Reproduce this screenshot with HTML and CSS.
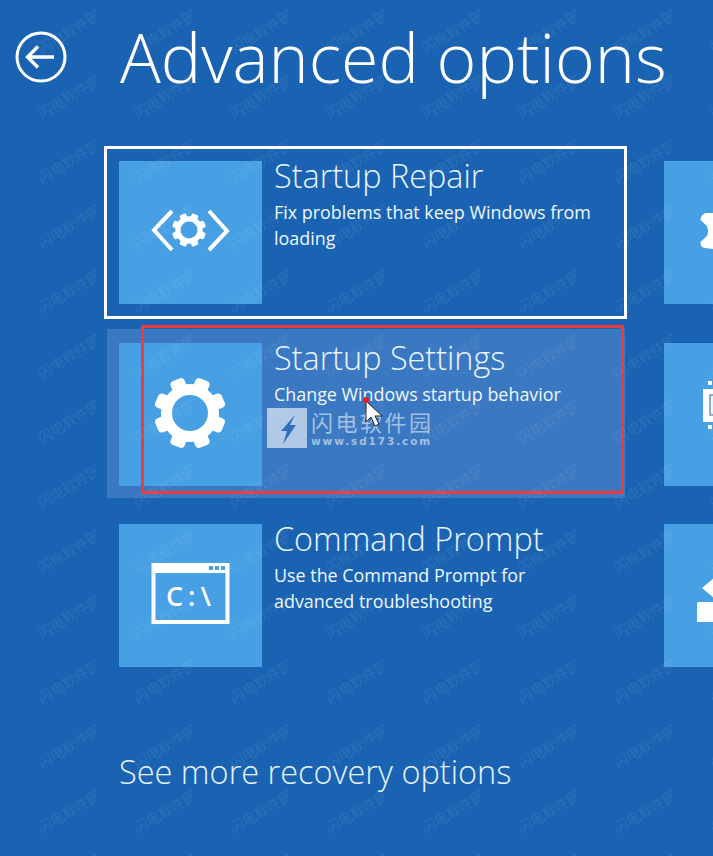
FILE: index.html
```html
<!DOCTYPE html>
<html lang="en">
<head>
  <meta charset="UTF-8" />
  <meta name="viewport" content="width=device-width, initial-scale=1.0"/>
  <title>Advanced options</title>
  <link rel="stylesheet" href="styles.css">
</head>
<body>

  <svg class="defs" width="0" height="0">
    <defs>
      <symbol id="gear" viewBox="-36 -36 72 72">
        <circle r="23.5" fill="none" stroke="#fff" stroke-width="11"/>
        <g fill="#fff">
          <rect x="-7.5" y="-36" width="15" height="12" rx="4" transform="rotate(22.5)"/>
          <rect x="-7.5" y="-36" width="15" height="12" rx="4" transform="rotate(67.5)"/>
          <rect x="-7.5" y="-36" width="15" height="12" rx="4" transform="rotate(112.5)"/>
          <rect x="-7.5" y="-36" width="15" height="12" rx="4" transform="rotate(157.5)"/>
          <rect x="-7.5" y="-36" width="15" height="12" rx="4" transform="rotate(202.5)"/>
          <rect x="-7.5" y="-36" width="15" height="12" rx="4" transform="rotate(247.5)"/>
          <rect x="-7.5" y="-36" width="15" height="12" rx="4" transform="rotate(292.5)"/>
          <rect x="-7.5" y="-36" width="15" height="12" rx="4" transform="rotate(337.5)"/>
        </g>
      </symbol>
    </defs>
  </svg>

  <header class="page-header">
    <svg class="back-icon" width="54" height="54" viewBox="0 0 54 54">
      <circle cx="27" cy="27" r="24" fill="none" stroke="#fff" stroke-width="3"/>
      <path d="M40 27H14M24 16.5 13.5 27 24 37.5" fill="none" stroke="#fff" stroke-width="3.4"/>
    </svg>
    <h1>Advanced options</h1>
  </header>

  <main class="options">
    <div class="option selected">
      <div class="tile">
        <svg class="tile-icon" viewBox="0 0 143 143">
          <path d="M53 50 35 69l18 20M90 50l18 20-18 19" fill="none" stroke="#fff" stroke-width="4"/>
          <use href="#gear" x="53" y="52" width="34" height="34"/>
        </svg>
      </div>
      <div class="option-text">
        <h2>Startup Repair</h2>
        <p>Fix problems that keep Windows from loading</p>
      </div>
    </div>
    <div class="tile side-tile">
      <svg class="tile-icon" viewBox="0 0 143 143">
        <path d="M50 52H42Q37 53 36.500 59L43 65Q45 71 43 75L36.500 81Q36 86 41 87L50 88Z" fill="#fff"/>
      </svg>
    </div>

    <div class="option hovered">
      <div class="tile">
        <svg class="tile-icon" viewBox="0 0 143 143">
          <use href="#gear" x="35" y="34" width="72" height="72"/>
        </svg>
      </div>
      <div class="option-text">
        <h2>Startup Settings</h2>
        <p>Change Windows startup behavior</p>
      </div>
    </div>
    <div class="tile side-tile">
      <svg class="tile-icon" viewBox="0 0 143 143">
        <rect x="39" y="46" width="20" height="33" fill="#fff"/>
        <rect x="46" y="52" width="14" height="20" fill="#eef5fb" stroke="#6e93c4" stroke-width="1.500"/>
        <path d="M44 38h4v4h-4zM44 82h4v4h-4z" fill="#fff"/>
      </svg>
    </div>

    <div class="option">
      <div class="tile">
        <svg class="tile-icon" viewBox="0 0 143 143">
          <rect x="34.500" y="41" width="74" height="57" fill="none" stroke="#fff" stroke-width="4"/>
          <rect x="33" y="39" width="77" height="10" fill="#fff"/>
          <path d="M90 42h4v4h-4zM96 42h4v4h-4zM102 42h4v4h-4z" fill="#46a0e3"/>
          <text class="prompt-text" x="47" y="82">C:\</text>
        </svg>
      </div>
      <div class="option-text">
        <h2>Command Prompt</h2>
        <p>Use the Command Prompt for advanced troubleshooting</p>
      </div>
    </div>
    <div class="tile side-tile">
      <svg class="tile-icon" viewBox="0 0 143 143">
        <path d="M38 64 50 54V74Z" fill="#fff"/>
        <path d="M50 78H35Q33 78 33 80V98H50Z" fill="#fff"/>
      </svg>
    </div>
  </main>

  <a class="more-link">See more recovery options</a>

  <!-- stuff burned into the screenshot -->
  <div class="red-box"></div>

  <div class="stamp">
    <div class="stamp-logo">
      <svg width="40" height="40" viewBox="0 0 40 40">
        <path d="M28 7 14 23h6l-4 13 13-19h-6l5-10Z" fill="#2f6fbc"/>
      </svg>
    </div>
    <div class="stamp-text">
      <div class="stamp-name">闪电软件园</div>
      <div class="stamp-url">www.sd173.com</div>
    </div>
  </div>

  <svg class="cursor" width="18" height="30" viewBox="0 0 18 30">
    <path d="M1 1v21l5-5 4 9 4-2-4-8h7Z" fill="#fff" stroke="#222" stroke-width="1"/>
  </svg>
  <div class="red-dot"></div>

  <svg class="watermark" width="713" height="856">
    <defs>
      <pattern id="wm" width="96" height="65" patternUnits="userSpaceOnUse">
        <text class="wm-text" transform="translate(42 54) rotate(-31)">闪电软件园</text>
      </pattern>
    </defs>
    <rect width="713" height="856" fill="url(#wm)"/>
  </svg>

</body>
</html>
```

FILE: styles.css
```css
* {
  box-sizing: border-box;
  margin: 0;
  padding: 0;
}

html, body {
  height: 856px;
  overflow: hidden;
}

body {
  position: relative;
  font-family: 'Open Sans', sans-serif;
  font-weight: 300;
  background-color: #1a63b3;
  color: #fff;
}

.defs {
  position: absolute;
}

.page-header {
  display: flex;
  align-items: center;
  height: 147px;
  padding: 0 0 33px 14px;
}

.back-icon {
  flex: none;
}

.page-header h1 {
  font-size: 68px;
  font-weight: 300;
  line-height: 114px;
  margin-left: 52px;
  white-space: nowrap;
}

.options {
  display: grid;
  grid-template-columns: 523px 143px;
  grid-template-rows: 171px 170px 171px;
  column-gap: 37px;
  row-gap: 11px;
  margin-left: 104px;
}

.option {
  display: flex;
  gap: 12px;
  padding: 14px 15px;
}

.option.selected {
  margin: -1px 0;
  padding: 12px 12px;
  border: 3px solid #fff;
}

.option.hovered {
  margin: 0 2px 1px 3px;
  padding-left: 12px;
  background-color: #3a78c2;
}

.tile {
  flex: none;
  width: 143px;
  height: 143px;
  background-color: #46a0e3;
}

.side-tile {
  margin-top: 14px;
}

.tile-icon {
  display: block;
  width: 143px;
  height: 143px;
}

.prompt-text {
  font-family: 'Open Sans', sans-serif;
  font-size: 27px;
  font-weight: 600;
  fill: #fff;
  letter-spacing: 5px;
}

.option-text {
  margin-top: -3px;
}

.option-text h2 {
  font-size: 32.400px;
  font-weight: 300;
  line-height: 34px;
  margin-bottom: 7px;
  white-space: nowrap;
  color: #eaf5fd;
}

.option-text p {
  font-size: 17.900px;
  font-weight: 400;
  line-height: 26px;
  width: 330px;
  color: #eef7fd;
}

.more-link {
  display: block;
  margin: 70px 0 0 119px;
  font-size: 32.500px;
  line-height: 42px;
  color: #e6f2fb;
}

.red-box {
  position: absolute;
  left: 141px;
  top: 325px;
  width: 483px;
  height: 169px;
  border: 3px solid #f0393c;
}

.stamp {
  position: absolute;
  left: 267px;
  top: 408px;
  display: flex;
  gap: 4px;
}

.stamp-logo {
  width: 40px;
  height: 40px;
  background-color: rgba(255, 255, 255, 0.6);
}

.stamp-text {
  color: rgba(255, 255, 255, 0.55);
  width: 124px;
}

.stamp-name {
  font-family: 'Noto Sans CJK SC', sans-serif;
  font-size: 22px;
  font-weight: 400;
  letter-spacing: 2.500px;
  line-height: 27px;
  white-space: nowrap;
}

.stamp-url {
  font-family: 'DejaVu Sans', sans-serif;
  font-size: 10.500px;
  font-weight: 700;
  letter-spacing: 1.900px;
  line-height: 13px;
  white-space: nowrap;
}

.cursor {
  position: absolute;
  left: 365px;
  top: 400px;
}

.red-dot {
  position: absolute;
  left: 363px;
  top: 397px;
  width: 6px;
  height: 6px;
  border-radius: 50%;
  background-color: #f01c1c;
}

.watermark {
  position: absolute;
  left: 0;
  top: 0;
  pointer-events: none;
}

.wm-text {
  font-family: 'Noto Sans CJK SC', sans-serif;
  font-size: 14px;
  fill: rgba(255, 255, 255, 0.1);
}
```
